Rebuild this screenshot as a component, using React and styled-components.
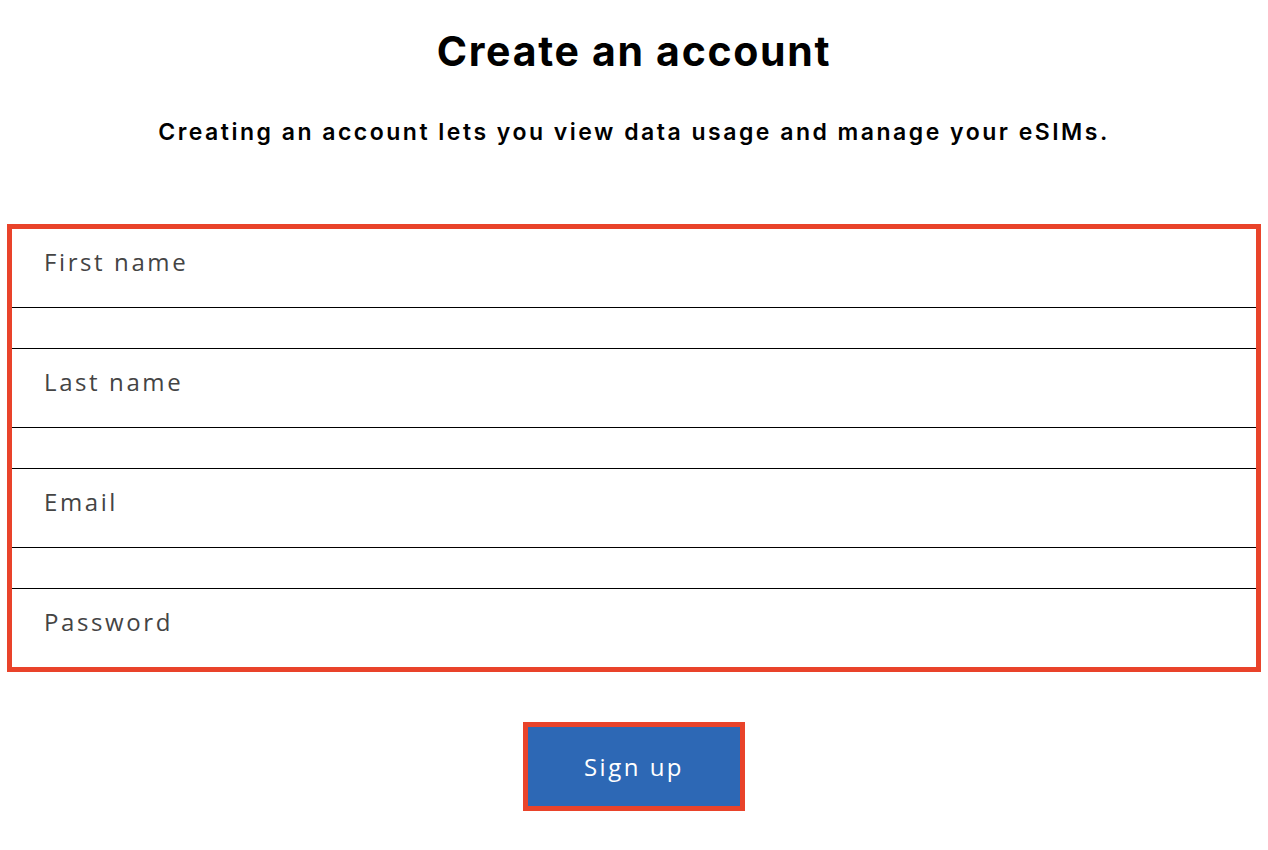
import styled, { createGlobalStyle } from "styled-components";

const GlobalStyle = createGlobalStyle`
  *, *::before, *::after {
    box-sizing: border-box;
  }
  body {
    margin: 0;
    background: #ffffff;
    font-family: "Open Sans", "Noto Sans", sans-serif;
  }
`;

const Container = styled.div`
  width: 100%;
  display: flex;
  flex-direction: column;
  align-items: center;
  padding-top: 31px;
`;

const Title = styled.h1`
  margin: 0;
  font-family: Inter, "Liberation Sans", sans-serif;
  font-size: 41px;
  font-weight: 700;
  line-height: 41px;
  letter-spacing: 1.7px;
  color: #000;
`;

const Subtitle = styled.p`
  margin: 49px 0 0;
  font-family: Inter, "Liberation Sans", sans-serif;
  font-size: 23px;
  font-weight: 600;
  line-height: 23px;
  letter-spacing: 2.5px;
  color: #000;
`;

const Form = styled.form`
  align-self: stretch;
  margin: 80px 7px 0;
  border: 5px solid #e9432a;
  display: flex;
  flex-direction: column;
`;

const Input = styled.input`
  height: 78px;
  border: none;
  outline: none;
  padding: 0 32px 14px;
  font-family: "Open Sans", "Noto Sans", sans-serif;
  font-size: 24px;
  letter-spacing: 2.6px;
  color: #333;
  background: transparent;

  &::placeholder {
    color: #444;
  }
`;

const Gap = styled.div`
  height: 42px;
  border-top: 1px solid #000;
  border-bottom: 1px solid #000;
`;

const Button = styled.button`
  margin-top: 50px;
  width: 222px;
  height: 89px;
  border: 5px solid #e9432a;
  background-color: #2d68b5;
  color: #fff;
  font-family: "Open Sans", "Noto Sans", sans-serif;
  font-size: 24px;
  letter-spacing: 2.5px;
  cursor: pointer;
`;

const fields = [
  { name: "firstName", placeholder: "First name", type: "text" },
  { name: "lastName", placeholder: "Last name", type: "text" },
  { name: "email", placeholder: "Email", type: "email" },
  { name: "password", placeholder: "Password", type: "password" },
];

const App = () => {
  return (
    <>
      <GlobalStyle />
      <Container>
        <Title>Create an account</Title>
        <Subtitle>
          Creating an account lets you view data usage and manage your eSIMs.
        </Subtitle>
        <Form onSubmit={(e) => e.preventDefault()}>
          {fields.map((f, i) => (
            <div key={f.name} style={{ display: "contents" }}>
              {i > 0 && <Gap />}
              <Input name={f.name} type={f.type} placeholder={f.placeholder} />
            </div>
          ))}
        </Form>
        <Button type="button">Sign up</Button>
      </Container>
    </>
  );
};

export default App;
